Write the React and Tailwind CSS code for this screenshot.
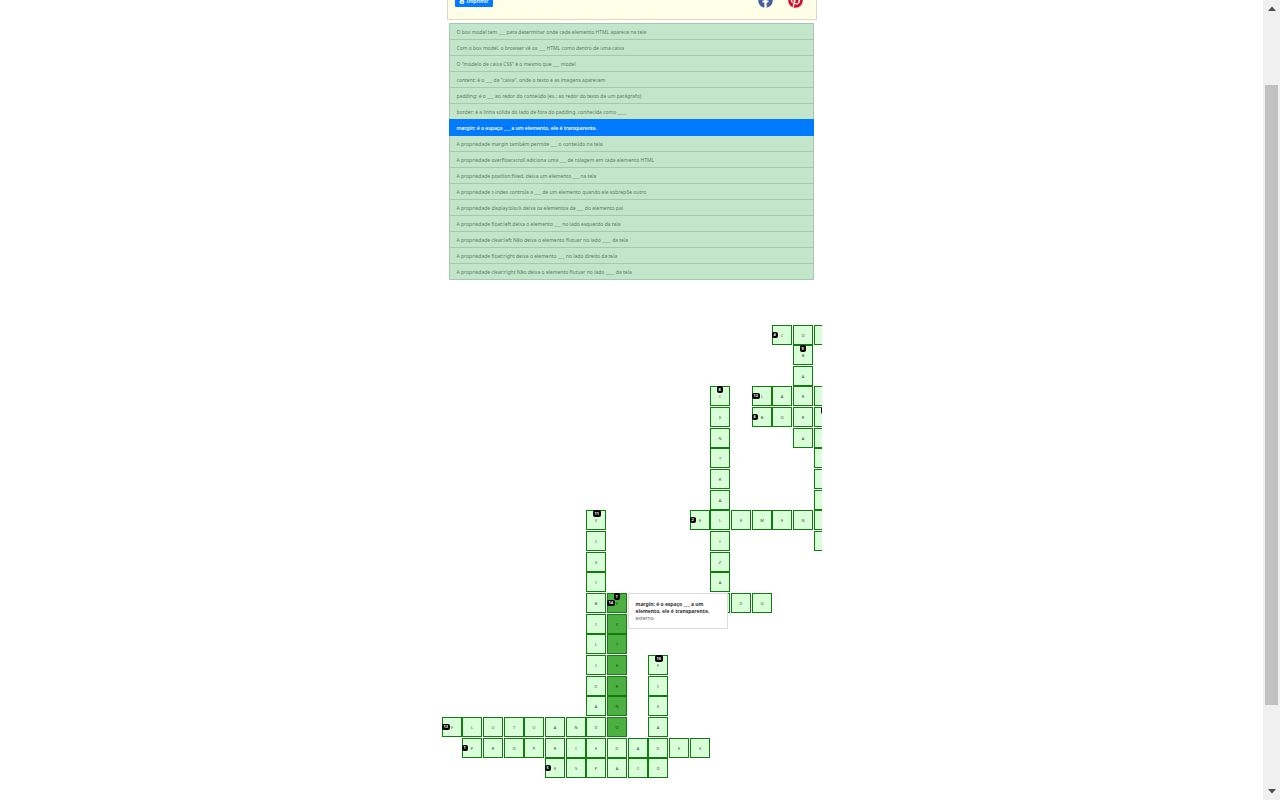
import { FaFacebook, FaPinterest } from "react-icons/fa";

const clues = [
  "O box model tem ___ para determinar onde cada elemento HTML aparece na tela",
  "Com o box model, o browser vê os ___ HTML como dentro de uma caixa",
  'O "modelo de caixa CSS" é o mesmo que ___ model',
  'content: é o ___ da "caixa", onde o texto e as imagens aparecem',
  "padding: é o ___ ao redor do conteúdo (ex.: ao redor do texto de um parágrafo)",
  "border: é a linha sólida do lado de fora do padding, conhecida como ____",
  "margin: é o espaço ___ a um elemento, ele é transparente.",
  "A propriedade margin também permite ___ o conteúdo na tela",
  "A propriedade overflow:scroll adiciona uma ___ de rolagem em cada elemento HTML",
  "A propriedade position:fixed, deixa um elemento ___ na tela",
  "A propriedade z-index controla a ___ de um elemento quando ele sobrepõe outro",
  "A propriedade display:block deixa os elementos da ___ do elemento pai",
  "A propriedade float:left deixa o elemento ___ no lado esquerdo da tela",
  "A propriedade clear:left Não deixa o elemento flutuar no lado ____ da tela",
  "A propriedade float:right deixa o elemento ___ no lado direito da tela",
  "A propriedade clear:right Não deixa o elemento flutuar no lado ____ da tela",
];
const activeClue = 6;

// Each entry: clue number, direction, starting row and column, letters ("." is an empty box).
const words = [
  { n: 4, down: false, row: 1, col: 17, text: "CO." },
  { n: 9, down: true, row: 2, col: 18, text: "BARRA" },
  { n: 12, down: false, row: 4, col: 16, text: "LAR." },
  { n: 6, down: false, row: 5, col: 16, text: "BOR." },
  { n: 15, down: true, row: 5, col: 19, text: "......." },
  { n: 8, down: true, row: 4, col: 14, text: "CENTRALIZA." },
  { n: 2, down: false, row: 10, col: 13, text: "ELEMEN." },
  { n: 11, down: true, row: 10, col: 8, text: "VISIBILIDADE" },
  { n: 7, down: true, row: 14, col: 9, text: "EXTERNO", active: true },
  { n: 14, down: false, row: 14, col: 9, text: "E" },
  { n: null, down: false, row: 14, col: 15, text: "DO" },
  { n: 10, down: true, row: 17, col: 11, text: "FIXADO" },
  { n: 13, down: false, row: 20, col: 1, text: "FLUTUANDO" },
  { n: 1, down: false, row: 21, col: 2, text: "PROPRIEDADES" },
  { n: 5, down: false, row: 22, col: 6, text: "ESPACO" },
];

function buildCells() {
  const cells = new Map();
  for (const word of words) {
    [...word.text].forEach((letter, i) => {
      const row = word.row + (word.down ? i : 0);
      const col = word.col + (word.down ? 0 : i);
      const key = `${row}-${col}`;
      const cell = cells.get(key) ?? { key, row, col, letter: letter === "." ? "" : letter };
      if (word.active) cell.active = true;
      if (i === 0 && word.n) cell[word.down ? "down" : "across"] = word.n;
      cells.set(key, cell);
    });
  }
  return [...cells.values()];
}
const cells = buildCells();

function Cell({ cell }) {
  return (
    <div
      className={`relative flex size-5 items-center justify-center border border-[#117a11] pt-px pl-px text-[4px] leading-none ${
        cell.active ? "bg-[#4caf41] text-[#14451a]" : "bg-[#d9ffd9] text-[#3a463a]"
      }`}
      style={{ gridRow: cell.row, gridColumn: cell.col }}
    >
      {cell.letter}
      {cell.across && (
        <span className="absolute top-[6px] -left-px flex h-[6px] items-center rounded-[2px] bg-black px-[2px] text-[4px] leading-none font-bold text-white">
          {cell.across}
        </span>
      )}
      {cell.down && (
        <span className="absolute -top-px left-[6px] flex h-[7px] items-center rounded-[2px] bg-black px-[2px] text-[4px] leading-none font-bold text-white">
          {cell.down}
        </span>
      )}
      {cell.active && cell.down && (
        <div
          role="tooltip"
          className="absolute -top-px left-full z-10 ml-[2px] h-9 w-[100px] border border-[#dddddd] bg-white px-[7px] py-[7px] text-[5px] leading-[7px] text-[#666]"
        >
          <p className="font-bold text-[#333]">{clues[activeClue]}</p>
          <p>externo</p>
        </div>
      )}
    </div>
  );
}

export default function App() {
  return (
    <div className="flex h-screen overflow-hidden bg-white font-['Noto_Sans',sans-serif]">
      <main className="flex min-w-0 flex-1 flex-col items-center overflow-hidden">
        <div className="flex w-[380px] flex-col">
          <header className="-mt-5 mr-[5px] ml-[5px] flex h-10 items-start justify-between border border-[#ddd9c0] bg-[#ffffe8] pt-3 pr-[13px] pl-[7px]">
            <button
              type="button"
              className="mt-[2px] flex h-3 w-[38px] items-center justify-center gap-[2px] rounded-[1px] bg-[#007bff] text-[5px] leading-none font-semibold text-white"
            >
              <svg className="size-[6px]" viewBox="0 0 12 12" fill="currentColor">
                <path d="M4 0h4v4q3 1 3 4 0 4-5 4T1 8q0-3 3-4Z" />
                <path d="M4.500 7h3v2.500h-3Z" fill="#007bff" />
              </svg>
              Imprimir
            </button>
            <div className="flex gap-[15px]">
              <a href="#facebook" aria-label="Facebook">
                <FaFacebook className="size-[15px] text-[#4460a0]" />
              </a>
              <a href="#pinterest" aria-label="Pinterest">
                <FaPinterest className="size-[15px] text-[#d50c2d]" />
              </a>
            </div>
          </header>

          <ol className="mt-[3px] mr-2 ml-[7px] rounded-[1px] border border-b-0 border-[#a3c9ae] bg-[#c3e6cb] text-[5px] text-[#5b7d64]">
            {clues.map((clue, i) => (
              <li key={clue}>
                <button
                  type="button"
                  className={
                    i === activeClue
                      ? "relative -mx-px -mt-px flex h-[17px] w-[calc(100%+2px)] items-center bg-[#007bff] px-2 pt-[2px] font-semibold text-white"
                      : "flex h-4 w-full items-center border-b border-[#a3c9ae] px-[7px] pt-[2px]"
                  }
                >
                  {clue}
                </button>
              </li>
            ))}
          </ol>

          <section
            aria-label="Palavras cruzadas"
            className="mt-[45px] grid grid-cols-[repeat(6,20px_21px_21px)_20px] grid-rows-[20px_21px_repeat(6,20px_21px_21px)_20px_20px] overflow-hidden"
          >
            {cells.map((cell) => (
              <Cell key={cell.key} cell={cell} />
            ))}
          </section>
        </div>
      </main>

      <aside aria-label="Barra de rolagem" className="flex w-[17px] shrink-0 flex-col items-center bg-[#f0f0f0]">
        <svg className="mt-[6px] h-[5px] w-2" viewBox="0 0 8 5" fill="#505050">
          <path d="M4 0.5 8 5H0Z" />
        </svg>
        <div className="mt-[74px] h-[620px] w-[13px] bg-[#c1c1c1]" />
        <svg className="mt-auto mb-[6px] h-[5px] w-2" viewBox="0 0 8 5" fill="#505050">
          <path d="M0 0h8L4 4.5Z" />
        </svg>
      </aside>
    </div>
  );
}
